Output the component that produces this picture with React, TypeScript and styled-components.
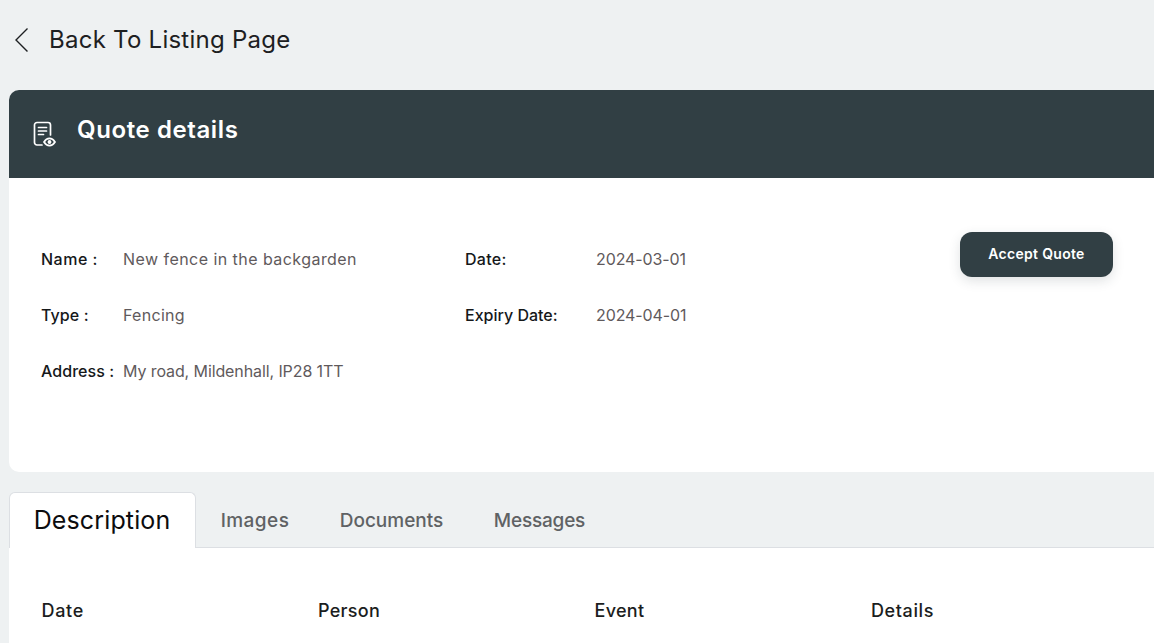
import styled, { createGlobalStyle } from "styled-components";

const GlobalStyle = createGlobalStyle`
  html, body {
    margin: 0;
    padding: 0;
    height: 643px;
    overflow: hidden;
    background: #eef1f2;
    font-family: Inter, "Noto Sans", sans-serif;
  }
`;

const Page = styled.div`
  width: 1200px;
  padding-left: 9px;
  box-sizing: border-box;
`;

const BackRow = styled.div`
  height: 90px;
  display: flex;
  align-items: center;
  gap: 19px;
  padding: 0 0 11px 5px;
  box-sizing: border-box;
  font-size: 24px;
  font-weight: 400;
  letter-spacing: 0.25px;
  color: #1d2022;
`;

const Card = styled.section`
  background: #fff;
  border-radius: 10px;
  overflow: hidden;
`;

const CardHeader = styled.div`
  height: 88px;
  background: #313f44;
  display: flex;
  align-items: center;
  gap: 20px;
  padding: 0 0 0 24px;
  box-sizing: border-box;
  color: #fff;
  font-size: 24px;
  font-weight: 600;
  letter-spacing: 0.6px;
`;

const HeaderTitle = styled.span`
  margin-bottom: 10px;
`;

const CardBody = styled.div`
  height: 294px;
  display: flex;
  padding: 53px 41px 0 32px;
  box-sizing: border-box;
`;

const Column = styled.div<{ $width: number; $labelWidth: number }>`
  width: ${(p) => p.$width}px;
  display: grid;
  grid-template-columns: ${(p) => p.$labelWidth}px 1fr;
  grid-auto-rows: 56px;
  align-content: start;
  font-size: 16px;
`;

const Label = styled.div<{ $tracking?: number }>`
  line-height: 56px;
  margin-top: -28px;
  padding-top: 28px;
  height: 56px;
  box-sizing: content-box;
  color: #15181a;
  font-weight: 500;
  white-space: nowrap;
  letter-spacing: ${(p) => p.$tracking ?? 0}px;
`;

const Value = styled(Label)`
  color: #5f5a5c;
  font-weight: 400;
`;

const Button = styled.button`
  width: 153px;
  height: 45px;
  flex: none;
  margin-top: 1px;
  padding: 0 0 2px;
  border: 0;
  border-radius: 12px;
  background: #313f44;
  color: #fff;
  font: 600 14px Inter, sans-serif;
  letter-spacing: 0.3px;
  box-shadow: 0 4px 12px rgba(50, 63, 69, 0.15);
`;

const Tabs = styled.div`
  height: 56px;
  margin-top: 20px;
  display: flex;
  align-items: stretch;
  border-bottom: 1px solid #dcdfe3;
  box-sizing: border-box;
`;

const Tab = styled.div<{ $width: number; $tracking: number }>`
  width: ${(p) => p.$width}px;
  padding-top: 1px;
  display: flex;
  align-items: center;
  justify-content: center;
  box-sizing: border-box;
  white-space: nowrap;
  font-size: 19px;
  font-weight: 500;
  letter-spacing: ${(p) => p.$tracking}px;
  color: #5f6264;
`;

const ActiveTab = styled(Tab)`
  height: 56px;
  padding: 0 1px 2px 0;
  font-size: 25px;
  font-weight: 400;
  color: #0c0c0e;
  background: #fff;
  border: 1px solid #dcdfe3;
  border-bottom: 0;
  border-radius: 6px 6px 0 0;
`;

const TableArea = styled.div`
  height: 95px;
  background: #fff;
  display: grid;
  grid-template-columns: repeat(4, 276.5px);
  padding: 51px 0 0 32.5px;
  box-sizing: border-box;
  font-size: 18px;
  font-weight: 500;
  color: #1b1d20;
`;

const Heading = styled.div<{ $tracking: number }>`
  line-height: 24px;
  letter-spacing: ${(p) => p.$tracking}px;
`;

export default function App() {
  return (
    <>
      <GlobalStyle />
      <Page>
        <BackRow>
          <svg width="16" height="26" viewBox="0 0 16 26" fill="none">
            <path d="M13.500 1.500 2 13l11.500 11.500" stroke="#1d2022" strokeWidth="1.4" />
          </svg>
          Back To Listing Page
        </BackRow>
        <Card>
          <CardHeader>
            <svg width="24" height="26" viewBox="0 0 24 26" fill="none" stroke="#fff" strokeWidth="1.7" strokeLinecap="round">
              <path d="M9 24H4a2.500 2.500 0 0 1-2.500-2.500V4A2.500 2.500 0 0 1 4 1.500h11A2.500 2.500 0 0 1 17.500 4v10" />
              <path d="M5.500 6.500h8M5.500 10h8M5.500 13.500h5" />
              <path d="M11 21c1.500-2.500 3.300-3.700 5.500-3.700S20.500 18.500 22 21c-1.500 2.500-3.300 3.700-5.500 3.700S12.500 23.500 11 21Z" />
              <circle cx="16.500" cy="21" r="1.100" fill="#fff" />
            </svg>
            <HeaderTitle>Quote details</HeaderTitle>
          </CardHeader>
          <CardBody>
            <Column $width={424} $labelWidth={82}>
              <Label $tracking={0.5}>Name :</Label>
              <Value $tracking={0.45}>New fence in the backgarden</Value>
              <Label $tracking={0.1}>Type :</Label>
              <Value $tracking={0.3}>Fencing</Value>
              <Label $tracking={0.05}>Address :</Label>
              <Value $tracking={-0.1}>My road, Mildenhall, IP28 1TT</Value>
            </Column>
            <Column $width={495} $labelWidth={131}>
              <Label $tracking={0.3}>Date:</Label>
              <Value $tracking={-0.1}>2024-03-01</Value>
              <Label>Expiry Date:</Label>
              <Value $tracking={-0.1}>2024-04-01</Value>
            </Column>
            <Button>Accept Quote</Button>
          </CardBody>
        </Card>
        <Tabs>
          <ActiveTab $width={187} $tracking={0.13}>Description</ActiveTab>
          <Tab $width={118} $tracking={0.45}>Images</Tab>
          <Tab $width={155} $tracking={0}>Documents</Tab>
          <Tab $width={141} $tracking={-0.2}>Messages</Tab>
        </Tabs>
        <TableArea>
          <Heading $tracking={0.7}>Date</Heading>
          <Heading $tracking={0.3}>Person</Heading>
          <Heading $tracking={0.3}>Event</Heading>
          <Heading $tracking={0.6}>Details</Heading>
        </TableArea>
      </Page>
    </>
  );
}
